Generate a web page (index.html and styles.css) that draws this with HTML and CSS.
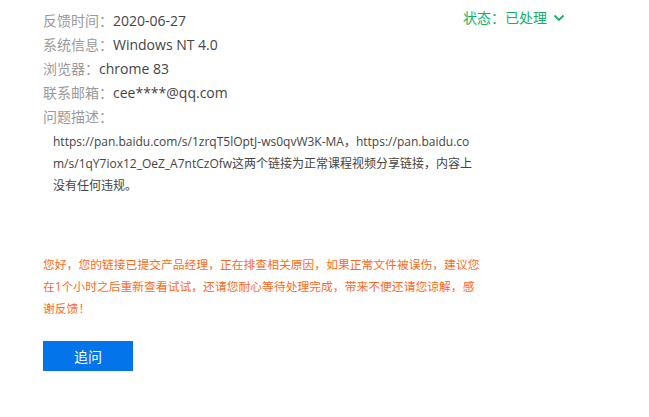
FILE: index.html
```html
<!DOCTYPE html>
<html lang="zh">
<head>
<meta charset="utf-8">
<link rel="stylesheet" href="styles.css">
</head>
<body>
<div class="page">
  <div class="top">
    <div class="info">
      <div class="row"><span class="label">反馈时间：</span><span class="value">2020-06-27</span></div>
      <div class="row"><span class="label">系统信息：</span><span class="value">Windows NT 4.0</span></div>
      <div class="row"><span class="label">浏览器：</span><span class="value">chrome 83</span></div>
      <div class="row"><span class="label">联系邮箱：</span><span class="value">cee****@qq.com</span></div>
      <div class="row"><span class="label">问题描述：</span></div>
    </div>
    <div class="status">状态：已处理
      <svg class="chev" width="12" height="8" viewBox="0 0 12 8"><path d="M1.5 1.5 L6 6 L10.5 1.5" fill="none" stroke="#12b06a" stroke-width="1.8"/></svg>
    </div>
  </div>
  <div class="desc">https://pan.baidu.com/s/1zrqT5lOptJ-ws0qvW3K-MA，https://pan.baidu.com/s/1qY7iox12_OeZ_A7ntCzOfw这两个链接为正常课程视频分享链接，内容上没有任何违规。</div>
  <div class="reply">您好，您的链接已提交产品经理，正在排查相关原因，如果正常文件被误伤，建议您在1个小时之后重新查看试试，还请您耐心等待处理完成，带来不便还请您谅解，感谢反馈！</div>
  <button class="btn">追问</button>
</div>
</body>
</html>
```
FILE: styles.css
```css
html, body {
  margin: 0;
  padding: 0;
  background: #fff;
}
body {
  font-family: "Open Sans", "Noto Sans CJK SC", sans-serif;
}
.page {
  padding: 9px 0 0 43px;
}
.top {
  display: flex;
  justify-content: space-between;
  align-items: flex-start;
  width: 522px;
}
.row {
  font-size: 14px;
  line-height: 24px;
  height: 24px;
  white-space: nowrap;
}
.label {
  color: #999;
}
.value {
  color: #444;
}
.status {
  font-size: 14px;
  line-height: 20px;
  color: #12b06a;
  display: flex;
  align-items: center;
  gap: 6px;
  margin-top: -1px;
}
.chev {
  display: block;
}
.desc {
  margin-top: 2px;
  margin-left: 10px;
  width: 428px;
  font-size: 12px;
  line-height: 22px;
  color: #444;
  word-break: break-all;
}
.reply {
  margin-top: 56px;
  width: 440px;
  font-size: 11.8px;
  line-height: 22px;
  color: #ff6a1a;
  word-break: break-all;
}
.btn {
  display: block;
  margin-top: 22px;
  width: 90px;
  height: 30px;
  border: none;
  border-radius: 0;
  background: #0474ea;
  color: #fff;
  font-family: "Noto Sans CJK SC", sans-serif;
  font-size: 14px;
  padding: 0;
}
```
